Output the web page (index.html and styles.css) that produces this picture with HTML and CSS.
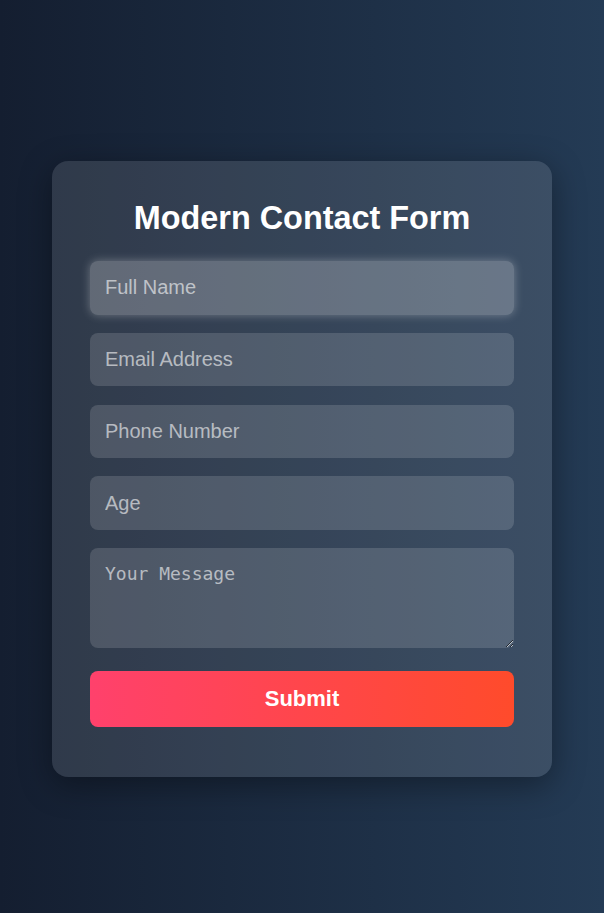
FILE: index.html
```html
<!DOCTYPE html>
<html lang="en">
<head>
<meta charset="utf-8">
<title>Modern Contact Form</title>
<link rel="stylesheet" href="styles.css">
</head>
<body>
  <div class="card">
    <h2 class="title">Modern Contact Form</h2>
    <form class="form">
      <input class="field is-focused" type="text" placeholder="Full Name">
      <input class="field" type="email" placeholder="Email Address">
      <input class="field" type="tel" placeholder="Phone Number">
      <input class="field" type="number" placeholder="Age">
      <textarea class="field message" placeholder="Your Message"></textarea>
      <button class="submit" type="button">Submit</button>
    </form>
  </div>
</body>
</html>
```
FILE: styles.css
```css
html, body {
  margin: 0;
  height: 100%;
}

body {
  min-height: 100vh;
  box-sizing: border-box;
  padding-top: 25px;
  display: flex;
  align-items: center;
  justify-content: center;
  background: linear-gradient(to right, #141e30, #243b55);
  font-family: "Liberation Sans", Arial, sans-serif;
}

.card {
  width: 500px;
  box-sizing: border-box;
  padding: 39px 38px 50px;
  background: rgba(255, 255, 255, 0.115);
  border-radius: 16px;
  box-shadow: 0 8px 32px rgba(0, 0, 0, 0.37);
}

.title {
  margin: 0 0 24px;
  text-align: center;
  color: #ffffff;
  font-size: 32.4px;
  font-weight: bold;
  line-height: 37px;
}

.form {
  display: flex;
  flex-direction: column;
}

.field {
  display: block;
  width: 100%;
  box-sizing: border-box;
  height: 53.5px;
  margin: 0 0 18.25px;
  padding: 0 15px;
  border: none;
  border-radius: 8px;
  background: rgba(255, 255, 255, 0.14);
  color: #ffffff;
  font-family: "Liberation Sans", Arial, sans-serif;
  font-size: 20px;
  outline: none;
}

.field::placeholder {
  color: rgba(255, 255, 255, 0.6);
}

.field.is-focused {
  background: rgba(255, 255, 255, 0.24);
  box-shadow: 0 0 10px rgba(255, 255, 255, 0.3);
}

.message {
  height: 100px;
  padding: 15px;
  margin-bottom: 23px;
  font-family: "DejaVu Sans Mono", monospace;
  font-size: 18px;
  line-height: 21px;
  resize: vertical;
}

.submit {
  display: block;
  width: 100%;
  height: 56px;
  border: none;
  border-radius: 8px;
  background: linear-gradient(to right, #ff416c, #ff4b2b);
  color: #ffffff;
  font-family: "Liberation Sans", Arial, sans-serif;
  font-size: 22px;
  font-weight: bold;
  cursor: pointer;
}
```
